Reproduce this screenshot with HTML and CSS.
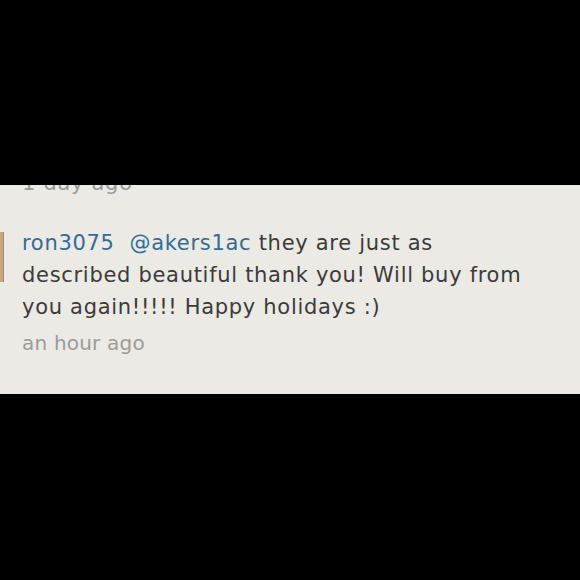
FILE: index.html
```html
<!DOCTYPE html>
<html lang="en">
<head>
    <meta charset="UTF-8">
    <meta name="viewport" content="width=device-width, initial-scale=1.0">
    <title>Comment</title>
    <link rel="stylesheet" href="styles.css">
</head>
<body>
    <div class="band">
        <div class="prev-time">1 day ago</div>
        <div class="comment">
            <div class="avatar"></div>
            <div class="body">
                <p class="text"><a class="user">ron3075</a>&nbsp; <a class="mention">@akers1ac</a> they are just as<br>described beautiful thank you! Will buy from<br>you again!!!!! Happy holidays :)</p>
                <div class="time">an hour ago</div>
            </div>
        </div>
    </div>
</body>
</html>
```

FILE: styles.css
```css
html, body {
    margin: 0;
    padding: 0;
    background-color: #000;
    height: 100%;
}
.band {
    margin-top: 185px;
    height: 209px;
    background-color: #ebeae5;
    overflow: hidden;
    font-family: "DejaVu Sans", sans-serif;
    font-size: 21px;
    letter-spacing: 0.7px;
}
.prev-time {
    margin-top: -16px;
    padding-left: 22px;
    line-height: 28px;
    color: #9c9b97;
}
.comment {
    display: flex;
    margin-top: 30px;
}
.avatar {
    width: 3px;
    height: 50px;
    margin-top: 5px;
    background-color: #c6a77c;
    border-right: 1px solid #a38a66;
}
.body {
    padding-left: 18px;
}
.text {
    margin: 0;
    line-height: 32px;
    color: #3b3b3a;
}
.user, .mention {
    color: #336b98;
}
.time {
    margin-top: 6px;
    line-height: 28px;
    font-size: 20px;
    letter-spacing: 0.2px;
    color: #9c9b97;
}
```
